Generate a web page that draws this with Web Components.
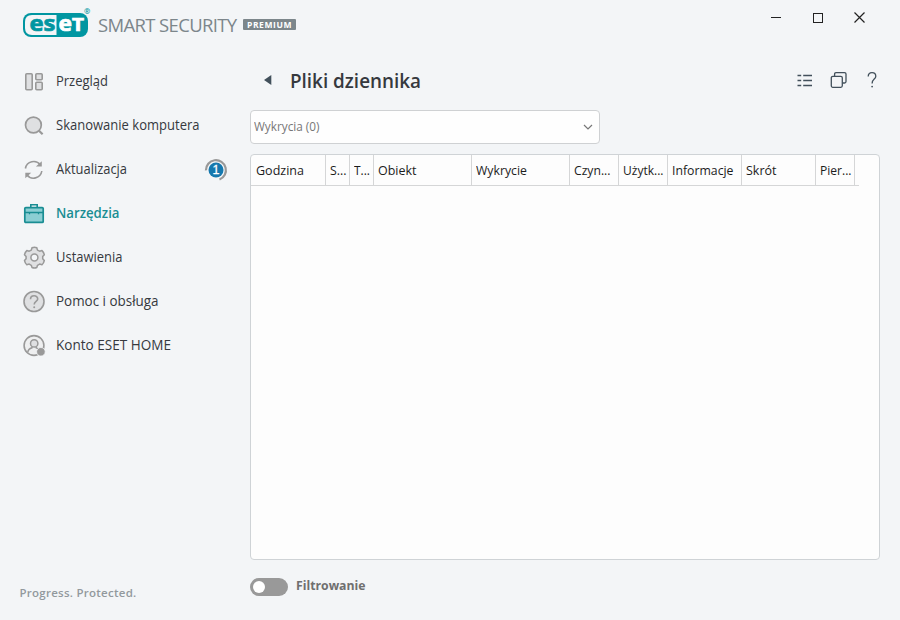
<!DOCTYPE html>
<html lang="pl">
<head>
<meta charset="utf-8">
<title>ESET Smart Security Premium</title>
<style>
html,body{margin:0;width:900px;height:620px;overflow:hidden;background:#f3f5f7}
body{font-family:"Open Sans","Noto Sans",sans-serif;color:#36393e}
</style>
</head>
<body>
<app-window></app-window>
<script>
const define = (name, html, setup) => customElements.define(name, class extends HTMLElement {
  connectedCallback() {
    if (this.shadowRoot) return;
    const t = document.createElement('template');
    t.innerHTML = typeof html === 'function' ? html(this) : html;
    this.attachShadow({ mode: 'open' }).append(t.content.cloneNode(true));
    if (setup) setup(this);
  }
});

/* Text condensed, or tracked when it is too short, so that it fills the given width. */
define('fit-text', '<style>:host{display:block;white-space:nowrap}span{display:inline-block;transform-origin:0 50%}</style><span></span>', el => {
  const s = el.shadowRoot.querySelector('span'), w = +el.getAttribute('w');
  s.textContent = el.getAttribute('text');
  const natural = s.getBoundingClientRect().width;
  if (!w || !natural) return;
  if (w < natural && !el.hasAttribute('track')) {
    s.style.transform = `scaleX(${(w / natural).toFixed(4)})`;
    s.style.marginRight = (w - natural) + 'px';
  } else s.style.letterSpacing = ((w - natural) / s.textContent.length).toFixed(3) + 'px';
});

const icons = {
  overview: '<g fill="#dfe0e2" stroke="#999" stroke-width="1.6"><rect x="2.8" y="3.8" width="6.4" height="16" rx="1"/><rect x="12.8" y="3.8" width="6.4" height="6" rx="1"/><rect x="12.8" y="12.3" width="6.4" height="7.5" rx="1"/></g>',
  scan: '<circle cx="10.4" cy="11" r="7.9" fill="#dfe0e2" stroke="#999" stroke-width="1.7"/><path d="M16 16.7 19.6 20.3" stroke="#999" stroke-width="2.2"/>',
  update: '<g fill="none" stroke="#999" stroke-width="1.6"><path d="M2.4 10.5A8.4 8.4 0 0 1 17.4 7"/><path d="M18.8 13A8.4 8.4 0 0 1 3.8 16.8"/></g><path d="M18.8 3.2V8.6H12.9ZM2.3 20.2V14.8H8.2Z" fill="#999"/>',
  tools: '<path d="M7.8 5.5V2.8H14.2V5.5" fill="none" stroke="#198d93" stroke-width="1.6"/><rect x="1.8" y="5.6" width="18.4" height="14.8" rx="1" fill="#8bced3" stroke="#198d93" stroke-width="1.7"/><path d="M2 10.5H20M6.5 10.5V12.2M15.5 10.5V12.2" stroke="#198d93" stroke-width="1.3"/>',
  settings: '<path d="M9 1.8Q11.4.8 13.8 1.8L14.5 4.1 16.6 5.2 19 4.6Q20.8 6.2 21.3 8.7L19.7 10.6V12.7L21.3 14.6Q20.8 17 19 18.7L16.6 18.1 14.5 19.3 13.8 21.5Q11.4 22.4 9 21.5L8.3 19.3 6.2 18.1 3.8 18.7Q2 17 1.5 14.6L3.1 12.7V10.6L1.5 8.7Q2 6.2 3.8 4.6L6.2 5.2 8.3 4.1Z" fill="#dfe0e2" stroke="#999" stroke-width="1.5" stroke-linejoin="round"/><circle cx="11.4" cy="11.6" r="3.5" fill="#f3f5f7" stroke="#999" stroke-width="1.5"/>',
  help: '<circle cx="11" cy="11.5" r="10" fill="#dfe0e2" stroke="#999" stroke-width="1.6"/><path d="M7.5 9.3C7.5 4.6 14.7 4.8 14.7 9 14.7 11.5 11.2 11.4 11.2 14.4" fill="none" stroke="#999" stroke-width="1.6"/><circle cx="11.2" cy="17.2" r="1" fill="#999"/>',
  account: '<circle cx="11" cy="11.5" r="9.9" fill="#eeeff0" stroke="#999" stroke-width="1.6"/><path d="M4.7 18.5C5 15.5 7 14.3 9 13.7V12.6M13.2 12.6V13.7C15 14.2 16.3 15 17 16.3" fill="#dfe0e2" stroke="#999" stroke-width="1.5"/><circle cx="11.2" cy="9.4" r="3.7" fill="#dfe0e2" stroke="#999" stroke-width="1.5"/><circle cx="17.9" cy="17.8" r="4.3" fill="#999" stroke="#f3f5f7" stroke-width=".8"/>'
};

define('nav-item', el => `<style>
:host{display:flex;align-items:center;height:44px;font-size:14px;line-height:20px}
:host([active]){color:#198d93;font-weight:600}
svg{display:block;flex:none;overflow:visible;margin-top:-1px}
fit-text{margin-left:10px;flex:1;margin-top:-3px}
</style><svg width="23" height="23">${icons[el.getAttribute('icon')]}</svg><fit-text text="${el.getAttribute('label')}" w="${el.getAttribute('w')}"></fit-text><slot></slot>`);

define('count-badge', `<style>:host{display:block;width:24px;height:24px;color:#fff}svg{display:block}text{font:12.5px "Liberation Sans",sans-serif}</style>
<svg width="24" height="24"><path d="M1.9 12.4A10 10 0 1 1 15.5 21.5" fill="none" stroke="#999" stroke-width="2.2"/><circle cx="12" cy="12" r="7.5" fill="#1578ae"/><text x="12" y="16.2" text-anchor="middle" fill="#fff" stroke="#fff" stroke-width=".3">1</text></svg>`);

define('side-nav', `<style>:host{display:block;padding:60px 0 0 23px;width:205px}count-badge{margin-top:-1px}</style>
<nav-item icon="overview" label="Przegląd" w="52"></nav-item>
<nav-item icon="scan" label="Skanowanie komputera" w="143.5"></nav-item>
<nav-item icon="update" label="Aktualizacja" w="71"><count-badge></count-badge></nav-item>
<nav-item icon="tools" label="Narzędzia" w="63.5" active></nav-item>
<nav-item icon="settings" label="Ustawienia" w="66.5"></nav-item>
<nav-item icon="help" label="Pomoc i obsługa" w="102.5"></nav-item>
<nav-item icon="account" label="Konto ESET HOME" w="115"></nav-item>`);

define('brand-logo', `<style>:host{display:flex;align-items:center;height:48px;padding-left:22px}
svg{display:block;flex:none}.e{font:bold 22px "Open Sans",sans-serif}.r{font:bold 7.5px "Open Sans",sans-serif}
.name{margin:1px 0 0 7px;width:139px;color:#7c868b;font-size:18.5px;line-height:24px}
.tag{margin:1px 0 0 6px;width:53px;height:11px;background:#7c868b;color:#fff;font-size:8.5px;line-height:11px;font-weight:700;border-radius:1px;display:flex;justify-content:center}</style>
<svg width="69" height="48"><rect x="1" y="13" width="65" height="24" rx="8" fill="#0096a1"/><path d="M34.5 15H10Q3 15 3 22V28Q3 35 10 35H34.5Z" fill="#f3f5f7"/>
<text class="e" x="7.5" y="31" textLength="26" lengthAdjust="spacingAndGlyphs" fill="#0096a1" stroke="#0096a1" stroke-width=".7">es</text><text class="e" x="36.5" y="31" textLength="13.5" lengthAdjust="spacingAndGlyphs" fill="#fff" stroke="#fff" stroke-width=".7">e</text><text x="50" y="31" textLength="12" lengthAdjust="spacingAndGlyphs" fill="#fff" stroke="#fff" stroke-width=".7" style="font:bold 17px 'Open Sans',sans-serif">T</text><text class="r" x="62" y="14" fill="#0096a1">®</text></svg>
<fit-text class="name" text="SMART SECURITY" w="138.5" track></fit-text>
<div class="tag"><fit-text text="PREMIUM" w="45"></fit-text></div>`);

define('window-controls', `<style>:host{display:flex;gap:26px;padding:9px 32px 0 0}svg{display:block}</style>
<svg width="16" height="16"><path d="M3 8.5H13" stroke="#222"/></svg>
<svg width="16" height="16"><rect x="3.5" y="4.5" width="9" height="9" fill="none" stroke="#222"/></svg>
<svg width="16" height="16"><path d="M2.5 3.5 12.5 13.5M12.5 3.5 2.5 13.5" stroke="#222" stroke-width="1.2"/></svg>`);

define('page-heading', `<style>:host{display:flex;align-items:center;height:42px;padding-left:13px}
svg{display:block}.back{margin-top:-2px}fit-text{margin-left:18px;flex:1;font-size:19px;line-height:28px;font-weight:600}
.acts{display:flex;gap:15px;align-items:center;margin:-2px 1px 0 0}</style>
<svg class="back" width="9" height="12"><path d="M8.3 1V11L1 6Z" fill="#42505b"/></svg>
<fit-text text="Pliki dziennika" w="131"></fit-text>
<div class="acts">
<svg width="18" height="18"><path d="M.5 4.5H4.2M.5 9.5H4.2M.5 14.5H4.2M6.2 4.5H15M6.2 9.5H15M6.2 14.5H15" stroke="#42505b" stroke-width="1.3"/></svg>
<svg width="20" height="20"><g fill="none" stroke="#42505b" stroke-width="1.3"><path d="M4.6 6V4Q4.6 2.6 6 2.6H14.5Q16 2.6 16 4V11.5Q16 13 14.5 13H12.6"/><rect x="1.3" y="6.3" width="11" height="11" rx="1.5"/></g></svg>
<svg width="14" height="20"><path d="M3.2 6.6C3.3 1.1 10.8 1.6 10.8 6.2 10.8 9.3 7.1 9 7.1 13.5" fill="none" stroke="#42505b" stroke-width="1.3"/><circle cx="7.1" cy="16.6" r=".9" fill="#42505b"/></svg>
</div>`);

define('log-select', `<style>:host{display:flex;box-sizing:border-box;align-items:center;justify-content:space-between;width:350px;height:34px;margin-top:8px;padding:0 5px 0 3px;border:1px solid #cfd1d3;border-radius:4px;background:#fefefe;color:#777;font-size:12px;line-height:18px}svg{display:block}</style>
<fit-text text="Wykrycia (0)" w="65.5"></fit-text><svg width="12" height="10"><path d="M2 3 6 7 10 3" fill="none" stroke="#777" stroke-width="1.2"/></svg>`);

const columns = [['Godzina',75,48],['S...',24,16.5],['T...',24,16],['Obiekt',98,38.5],['Wykrycie',98,51],['Czyn...',49,36.5],['Użytk...',49,40.5],['Informacje',74,61.5],['Skrót',74,30.5],['Pier...',39,31.5]];
define('log-table', () => `<style>:host{display:block;box-sizing:border-box;width:630px;height:406px;margin-top:10px;border:1px solid #cfd3d6;border-radius:4px;background:#fdfdfd;color:#1c1c1c;font-size:12.5px}
.head{display:flex;width:608px;height:30px;border-bottom:1px solid #d5d6d7}
.c{box-sizing:border-box;border-right:1px solid #d5d6d7;padding:7px 0 0 4px;line-height:18px;flex:none}.c:first-child{padding-left:5px}</style>
<div class="head">${columns.map(([t,w,tw]) => `<div class="c" style="width:${w}px"><fit-text text="${t}" w="${tw}"></fit-text></div>`).join('')}</div>`);

define('filter-toggle', `<style>:host{display:flex;height:18px;margin-top:18px;color:#6f6f6f;font-size:13px;font-weight:700;line-height:18px}
.t{box-sizing:border-box;width:38px;height:18px;padding:3px;border-radius:9px;background:#999;margin-right:8px}
.t i{display:block;width:12px;height:12px;border-radius:50%;background:#fff}fit-text{margin-top:-2px}</style>
<div class="t"><i></i></div><fit-text text="Filtrowanie" w="69.5"></fit-text>`);

define('app-window', `<style>:host{display:grid;grid-template-columns:250px 630px 20px;grid-template-rows:60px 1fr;width:900px;height:620px;background:#f3f5f7}
header{grid-column:1/-1;display:flex;justify-content:space-between}
aside{display:flex;flex-direction:column;justify-content:space-between}
side-nav{padding-top:0}
.motto{margin:0 0 18px 19.5px;color:#92999d;font-size:11.5px;line-height:18px;font-weight:600}</style>
<header><brand-logo></brand-logo><window-controls></window-controls></header>
<aside><side-nav></side-nav><fit-text class="motto" text="Progress. Protected." w="117"></fit-text></aside>
<main><page-heading></page-heading><log-select></log-select><log-table></log-table><filter-toggle></filter-toggle></main>`);
</script>
</body>
</html>
